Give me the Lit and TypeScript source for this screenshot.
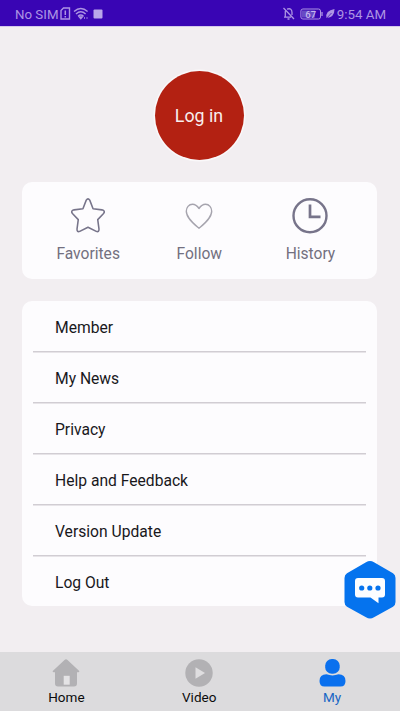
import { LitElement, html, svg, css } from "lit";
import { customElement } from "lit/decorators.js";

const star = html`<svg width="36" height="36" viewBox="-0.500 0 37 37" fill="none" stroke="#77748a" stroke-width="1.6" stroke-linejoin="round">
  <path d="M16.2 2.2Q18 -0.400 19.800 2.200L23.200 11L32.300 12.200Q36.200 13.200 34 16L28 22.200L29.300 32Q29.400 35.400 26.500 34.300L18 30L9.500 34.300Q6.600 35.400 6.700 32L8 22.200L2 16Q-0.200 13.200 3.700 12.200L12.800 11Z"/></svg>`;
const heart = html`<svg width="28" height="28" viewBox="0 0 28 28" fill="none" stroke="#a6a4ae" stroke-width="1.400" stroke-linejoin="round">
  <path d="M14 6.500C12 3.500 9.700 2.300 7.500 2.300C3.800 2.300 1.300 5.500 1.300 9.300C1.300 16 9 22 14 26.300C19 22 26.700 16 26.700 9.300C26.700 5.500 24.200 2.300 20.500 2.300C18.300 2.300 16 3.500 14 6.500Z"/></svg>`;
const clock = html`<svg width="36" height="36" viewBox="0 0 36 36" fill="none" stroke="#77748a">
  <circle cx="18" cy="17.700" r="16.500" stroke-width="2.400"/><path d="M18 6.500V18.800H28.500" stroke-width="2.700"/></svg>`;

const home = html`<svg width="28" height="28" viewBox="0 0 28 28" fill="#b2b1b4">
  <path d="M12.500 0.900Q14 -0.200 15.500 0.900L27 11.700Q28 13.200 26.200 13.300H25V24.500Q25 27.500 22 27.500H6Q3 27.500 3 24.500V13.300H1.800Q0 13.200 1 11.700Z"/><path fill="#e4e3e5" d="M11.700 16.800H17.700V25.700H11.700Z"/></svg>`;
const video = html`<svg width="28" height="28" viewBox="0 0 28 28">
  <circle cx="14" cy="14" r="13.700" fill="#b2b1b4"/><path d="M10.500 8.200V19.800L20 14Z" fill="#dfdee0"/></svg>`;
const person = html`<svg width="28" height="28" viewBox="-0.500 0 28 28" fill="#0a70ee">
  <rect x="6.700" y="0" width="14.500" height="14.800" rx="6.600"/><path d="M8 15.300Q14 17.500 20 15.300Q27 15.300 27 22Q27 27.600 22 27.600H6Q1 27.600 1 22Q1 15.300 8 15.300Z"/></svg>`;

@customElement("app-root")
export class AppRoot extends LitElement {
  static styles = css`
    :host { display: flex; flex-direction: column; height: 711px; background: #f2eef1; font-family: Roboto, "Liberation Sans", sans-serif; overflow: hidden; position: relative; }
    svg { display: block; flex: none; }
    .status { border-bottom: 1px solid #d4c8ec; box-sizing: border-box; height: 27px; background: #3905b4; color: #ad95e3; display: flex; align-items: center; padding: 2px 14px 0 15px; font-size: 13.300px; }
    .status .grow { flex: 1; }
    .login { width: 89px; height: 89px; margin: 44px 0 0 154.500px; border-radius: 50%; background: #b32112; color: #f8eeee; display: flex; align-items: center; justify-content: center; font-size: 17.800px; box-shadow: 0 0 0 1.500px #faf8fa; }
    .card { background: #fdfcfe; border-radius: 10px; margin: 0 23px 0 21.600px; }
    .quick { margin-top: 22px; height: 97px; display: flex; padding: 0 11px; }
    .item { flex: 1; display: flex; flex-direction: column; align-items: center; color: #737080; font-size: 15.600px; }
    .icon { height: 36px; margin: 16px 0 9px; display: flex; align-items: center; }
    .item span { line-height: 22px; }
    .list { margin-top: 22px; height: 305px; padding: 0 11px 0 11.400px; box-sizing: border-box; }
    .row { height: 51.100px; box-sizing: border-box; padding: 1px 0 0 22px; display: flex; align-items: center; color: #19181c; font-size: 15.650px; box-shadow: inset 0 -1px #d1cdd3, 0 0.500px #d1cdd3; }
    .row:last-child { box-shadow: none; }
    .nav { margin-top: auto; height: 59px; background: #dcdbdd; display: flex; padding-right: 1.600px; }
    .tab { flex: 1; display: flex; flex-direction: column; align-items: center; padding-top: 7px; font-size: 13.500px; color: #0b0b0c; }
    .tab span { line-height: 18px; margin-top: 1px; }
    .active { color: #1765c4; }
    .chat { position: absolute; left: 343px; top: 559px; }
  `;

  render() {
    return html`
      <div class="status">
        <span>No SIM</span>
        <svg width="46" height="16" viewBox="59.500 5.500 46 16" fill="none" stroke="#ad95e3" stroke-width="1.400">
          <path d="M64 7.500H70V18.500H61.500V10Z"/><path d="M65.800 10v4.500M65.800 15.500v1.500" stroke-width="1.500"/>
          <path d="M74.500 11Q81.300 5 88.100 11M76.500 13.500Q81.300 9 86.100 13.500M78.500 15.800Q81.300 13.300 84 15.800"/><path d="M80 16.500H82.600L81.300 18ZM84.500 17.500h1M87 17.500h1" stroke-width="1.500"/>
          <rect x="94" y="9" width="9" height="9" rx="1" fill="#b9a6ea" stroke="none"/>
        </svg>
        <span class="grow"></span>
        <svg width="55" height="16" viewBox="282 5.500 55 16" fill="none" stroke="#ad95e3" stroke-width="1.300">
          <path d="M283.500 7.500L294 18.500M284 16.700H291M285.300 16.500V11L286 10M287 8.700Q292 7 292 12V14.500M287.500 18.500H289.500"/>
          <rect x="300.900" y="8.500" width="19.600" height="10" rx="2" stroke-width="1"/><path d="M322 11.500V15.500"/>
          <rect x="302" y="10" width="13" height="7" fill="#684bc4" stroke="none"/>
          ${svg`<text x="310.700" y="17" text-anchor="middle" font-size="9.500" font-weight="500" fill="#c5b6ef" stroke="none">67</text>`}
          <path d="M326.500 17.500Q325 10 334.500 8.500Q334.500 17 326.500 17.500Z" fill="#ad95e3" stroke="none"/>
          <path d="M326 18.500L331.500 12.500" stroke="#3905b4" stroke-width="0.700"/>
        </svg>
        <span>9:54 AM</span>
      </div>
      <div class="login">Log in</div>
      <div class="card quick">
        ${[[star, "Favorites"], [heart, "Follow"], [clock, "History"]].map(
          ([icon, label]) => html`<div class="item"><div class="icon">${icon}</div><span>${label}</span></div>`
        )}
      </div>
      <div class="card list">
        ${["Member", "My News", "Privacy", "Help and Feedback", "Version Update", "Log Out"].map(
          (t) => html`<div class="row">${t}</div>`
        )}
      </div>
      <div class="nav">
        <div class="tab">${home}<span>Home</span></div>
        <div class="tab">${video}<span>Video</span></div>
        <div class="tab active">${person}<span>My</span></div>
      </div>
      <svg class="chat" width="54" height="62" viewBox="343 559 54 62">
        <path d="M366 562.300Q370 559.700 374 562.300L393 573.200Q395.500 574.700 395.500 578V602Q395.500 605.200 393 606.700L374 617.300Q370 619.700 366 617.300L347 606.700Q344.500 605.200 344.500 602V578Q344.500 574.700 347 573.200Z" fill="#0573ee"/>
        <path d="M358 578H382Q385 578 385 581V594.500Q385 597.500 382 597.500H378.500V603.200L370.500 597.500H358Q355 597.500 355 594.500V581Q355 578 358 578Z" fill="#fcfdff"/>
        <g fill="#0573ee"><circle cx="361.700" cy="588" r="2.600"/><circle cx="369.800" cy="588" r="2.600"/><circle cx="378" cy="588" r="2.600"/></g>
      </svg>`;
  }
}
